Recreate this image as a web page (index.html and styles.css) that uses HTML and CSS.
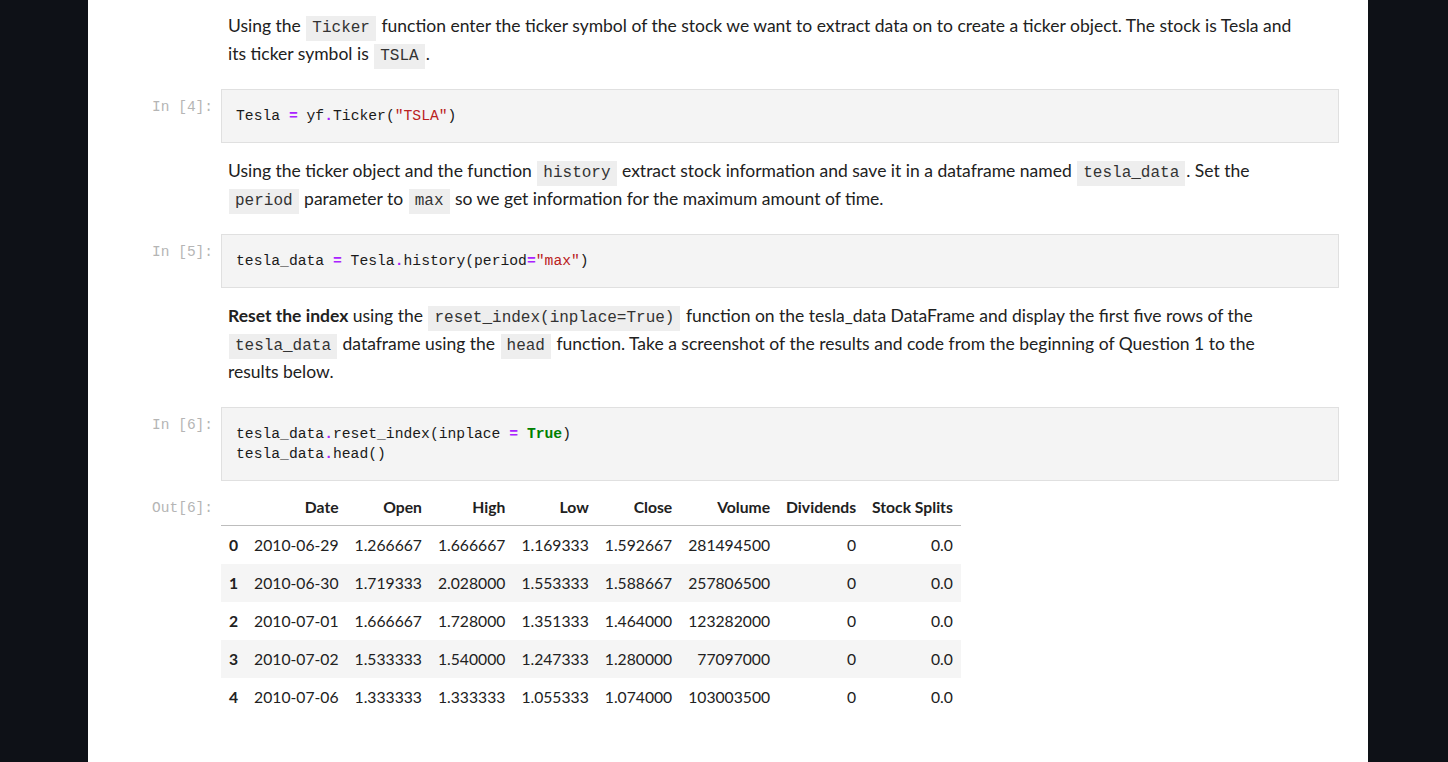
FILE: index.html
```html
<!DOCTYPE html>
<html>
<head>
<meta charset="utf-8">
<link rel="stylesheet" href="styles.css">
</head>
<body>
<div class="page">
  <div class="notebook">
    <div class="cell md first">
      <div class="prompt"></div>
      <div class="md-body">
        <p>Using the <code>Ticker</code> function enter the ticker symbol of the stock we want to extract data on to create a ticker object. The stock is Tesla and its ticker symbol is <code>TSLA</code>.</p>
      </div>
    </div>

    <div class="cell code">
      <div class="prompt">In&nbsp;[4]:</div>
      <div class="input"><pre>Tesla <span class="o">=</span> yf<span class="o">.</span>Ticker(<span class="s">"TSLA"</span>)</pre></div>
    </div>

    <div class="cell md">
      <div class="prompt"></div>
      <div class="md-body">
        <p>Using the ticker object and the function <code>history</code> extract stock information and save it in a dataframe named <code>tesla_data</code>. Set the <code>period</code> parameter to <code>max</code> so we get information for the maximum amount of time.</p>
      </div>
    </div>

    <div class="cell code">
      <div class="prompt">In&nbsp;[5]:</div>
      <div class="input"><pre>tesla_data <span class="o">=</span> Tesla<span class="o">.</span>history(period<span class="o">=</span><span class="s">"max"</span>)</pre></div>
    </div>

    <div class="cell md">
      <div class="prompt"></div>
      <div class="md-body">
        <p><b>Reset the index</b> using the <code>reset_index(inplace=True)</code> function on the tesla_data DataFrame and display the first five rows of the <code>tesla_data</code> dataframe using the <code>head</code> function. Take a screenshot of the results and code from the beginning of Question 1 to the results below.</p>
      </div>
    </div>

    <div class="cell code">
      <div class="prompt">In&nbsp;[6]:</div>
      <div class="input"><pre>tesla_data<span class="o">.</span>reset_index(inplace <span class="o">=</span> <span class="k">True</span>)
tesla_data<span class="o">.</span>head()</pre></div>
    </div>

    <div class="cell out">
      <div class="prompt">Out[6]:</div>
      <div class="output">
        <table class="df">
          <thead>
            <tr><th></th><th>Date</th><th>Open</th><th>High</th><th>Low</th><th>Close</th><th>Volume</th><th>Dividends</th><th>Stock Splits</th></tr>
          </thead>
          <tbody>
            <tr><th>0</th><td>2010-06-29</td><td>1.266667</td><td>1.666667</td><td>1.169333</td><td>1.592667</td><td>281494500</td><td>0</td><td>0.0</td></tr>
            <tr><th>1</th><td>2010-06-30</td><td>1.719333</td><td>2.028000</td><td>1.553333</td><td>1.588667</td><td>257806500</td><td>0</td><td>0.0</td></tr>
            <tr><th>2</th><td>2010-07-01</td><td>1.666667</td><td>1.728000</td><td>1.351333</td><td>1.464000</td><td>123282000</td><td>0</td><td>0.0</td></tr>
            <tr><th>3</th><td>2010-07-02</td><td>1.533333</td><td>1.540000</td><td>1.247333</td><td>1.280000</td><td>77097000</td><td>0</td><td>0.0</td></tr>
            <tr><th>4</th><td>2010-07-06</td><td>1.333333</td><td>1.333333</td><td>1.055333</td><td>1.074000</td><td>103003500</td><td>0</td><td>0.0</td></tr>
          </tbody>
        </table>
      </div>
    </div>
  </div>
</div>
</body>
</html>
```
FILE: styles.css
```css
html, body {
  margin: 0;
  padding: 0;
  background: #0e1117;
  height: 100%;
}
.page {
  margin-left: 88px;
  width: 1280px;
  min-height: 762px;
  background: #ffffff;
  overflow: hidden;
}
.notebook {
  padding-right: 29px;
  font-family: "Lato", "Noto Sans", sans-serif;
  color: #212121;
}
.cell {
  display: flex;
  align-items: flex-start;
}
.prompt {
  flex: 0 0 125px;
  width: 125px;
  padding-right: 8px;
  text-align: right;
  font-family: "Liberation Mono", monospace;
  font-size: 14.5px;
  color: #b5b5b5;
  line-height: 20px;
}
.md-body {
  flex: 1;
  padding: 0 36px 0 7px;
}
.md-body p {
  margin: 0;
  font-size: 17.5px;
  line-height: 28px;
}
.md.first { margin-top: 12px; }
.md { margin-top: 14px; }
.code { margin-top: 21px; }
.code .prompt { padding-top: 8px; }
code {
  font-family: "Liberation Mono", monospace;
  font-size: 16px;
  line-height: 1;
  background: #eeeeee;
  color: #333;
  padding: 3px 6px 4px;
  margin: 0 1px;
}
.input {
  flex: 1;
  background: #f4f4f4;
  border: 1px solid #e0e0e0;
  padding: 16px 14px;
}
.input pre {
  margin: 0;
  font-family: "Liberation Mono", monospace;
  font-size: 14.7px;
  line-height: 20px;
  color: #1a1a1a;
}
.o { color: #aa22ff; font-weight: bold; }
.s { color: #ba2121; }
.k { color: #008000; font-weight: bold; }

.out { margin-top: 8px; }
.out .prompt { padding-top: 9px; }
.output { flex: 1; }
table.df {
  border-collapse: collapse;
  font-size: 15.7px;
  color: #212121;
}
.df th, .df td {
  text-align: right;
  padding: 0 8px;
  height: 38px;
  white-space: nowrap;
}
.df thead th {
  font-weight: bold;
  border-bottom: 1px solid #bdbdbd;
  height: 36px;
}
.df tbody th { font-weight: bold; }
.df tbody tr:nth-child(even) { background: #f5f5f5; }
```
